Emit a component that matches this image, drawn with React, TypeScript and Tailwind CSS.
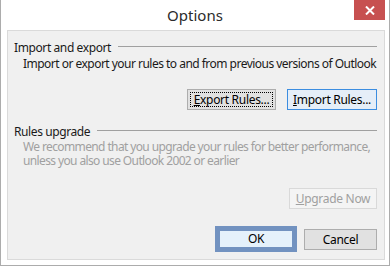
import React from 'react'

const font = { fontFamily: '"Noto Sans", "Open Sans", sans-serif' }

const GroupHeader: React.FC<{ title: string; className?: string }> = ({ title, className }) => (
    <div className={`flex h-[16px] items-center ${className ?? ''}`}>
        <span className="whitespace-nowrap text-[12px] leading-[16px] tracking-[-0.4px] text-[#1a1a1a]">{title}</span>
        <div className="ml-[7px] mb-[3px] h-px flex-1 bg-[#a0a0a0]" />
    </div>
)

const App: React.FC = () => {
    return (
        <div className="h-[267px] w-[391px] overflow-hidden bg-white" style={font}>
            <div className="h-[266px] w-[390px] border-x border-b border-[#acacac] bg-white">
                {/* title bar */}
                <div className="grid h-[30px] grid-cols-[1fr_auto_1fr] items-start">
                    <div />
                    <div className="pt-[5px] text-[15px] leading-[20px] text-[#2b2b2b]">Options</div>
                    <div className="flex justify-end pr-[4px]">
                        <div className="flex h-[20px] w-[31px] items-center justify-center bg-[#c75050]">
                            <svg width="10" height="9" viewBox="0 0 10 9">
                                <path d="M1 0.5 L9 8.5 M9 0.5 L1 8.5" stroke="white" strokeWidth="2" />
                            </svg>
                        </div>
                    </div>
                </div>

                {/* content panel */}
                <div className="ml-[6px] flex h-[230px] w-[378px] flex-col border border-[#dadada] bg-[#f0f0f0] pl-[6px] pr-[7px] tracking-[-0.3px]">
                    <GroupHeader title="Import and export" className="mt-[9px]" />
                    <div className="whitespace-nowrap pl-[9px] text-[12px] leading-[16px] tracking-[-0.52px] text-[#1a1a1a]">
                        Import or export your rules to and from previous versions of Outlook
                    </div>

                    <div className="mt-[17px] flex justify-end gap-[11px]">
                        <button className="flex h-[21px] w-[89px] border border-[#adadad] bg-[#e1e1e1] p-[2px]">
                            <span className="flex flex-1 items-center justify-center whitespace-nowrap border border-dotted border-black text-[12px] leading-[14px] text-black">
                                <span className="underline">E</span>xport Rules...
                            </span>
                        </button>
                        <button className="flex h-[21px] w-[90px] items-center justify-center whitespace-nowrap border border-[#3c8de0] bg-[#e5eef8] text-[12px] leading-[14px] text-black">
                            <span className="underline">I</span>mport Rules...
                        </button>
                    </div>

                    <GroupHeader title="Rules upgrade" className="mt-[14px]" />
                    <div className="whitespace-nowrap pl-[9px] text-[12px] leading-[13.5px] tracking-[-0.62px] text-[#a0a0a0]">
                        We recommend that you upgrade your rules for better performance,
                        <br />
                        unless you also use Outlook 2002 or earlier
                    </div>

                    <div className="mt-[21px] flex justify-end">
                        <button className="flex h-[21px] w-[88px] items-center justify-center whitespace-nowrap border border-[#d9d9d9] bg-[#f4f4f4] text-[12px] leading-[14px] text-[#a0a0a0]">
                            <span className="underline">U</span>pgrade Now
                        </button>
                    </div>

                    <div className="mt-[17px] flex items-start justify-end gap-[7px]">
                        <button className="flex h-[26px] w-[82px] items-center justify-center border-[5px] border-[#7292c0] bg-[#e5f1fb] text-[12px] leading-[14px] text-black">
                            OK
                        </button>
                        <button className="mt-[3px] flex h-[21px] w-[73px] items-center justify-center border border-[#adadad] bg-[#e1e1e1] text-[12px] leading-[14px] text-black">
                            Cancel
                        </button>
                    </div>
                </div>
            </div>
        </div>
    )
}

export default App
